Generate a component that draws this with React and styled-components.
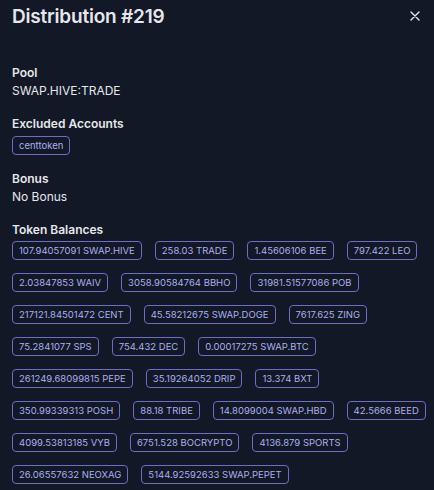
import React from 'react';
import styled, { createGlobalStyle } from 'styled-components';

const GlobalStyle = createGlobalStyle`
  html, body {
    margin: 0;
    padding: 0;
    background: #121826;
  }
  body {
    font-family: 'Inter', 'Liberation Sans', sans-serif;
    -webkit-font-smoothing: antialiased;
  }
`;

const Panel = styled.div`
  width: 434px;
  height: 490px;
  box-sizing: border-box;
  background: #121826;
  color: #e5e7eb;
  padding: 2px 12px 0 12px;
  overflow: hidden;
`;

const Header = styled.header`
  display: flex;
  align-items: center;
  justify-content: space-between;
  height: 28px;
  margin-bottom: 34px;
`;

const Title = styled.h2`
  margin: 0;
  font-size: 19px;
  font-weight: 600;
  letter-spacing: -0.2px;
  color: #e5e7eb;
`;

const CloseButton = styled.button`
  background: none;
  border: none;
  padding: 0;
  margin-right: 1px;
  width: 12px;
  height: 12px;
  display: flex;
  align-items: center;
  justify-content: center;
  cursor: pointer;
  color: #e5e7eb;
`;

const Section = styled.section`
  margin-bottom: 15px;
`;

const Label = styled.div`
  font-size: 12px;
  line-height: 18px;
  font-weight: 600;
  color: #e5e7eb;
`;

const Value = styled.div`
  font-size: 12px;
  line-height: 18px;
  font-weight: 400;
  color: #e5e7eb;
`;

const BadgeList = styled.div`
  display: flex;
  flex-wrap: wrap;
  column-gap: 13px;
  row-gap: 13px;
  margin-right: -10px;
  margin-top: ${(p) => p.$offset || 3}px;
`;

const Badge = styled.span`
  display: inline-flex;
  align-items: center;
  height: 19px;
  box-sizing: border-box;
  padding: 0 6px;
  border: 1px solid #6a6fc4;
  border-radius: 4px;
  font-size: 9.5px;
  color: #a9b1ee;
  white-space: nowrap;
`;

const balances = [
  '107.94057091 SWAP.HIVE',
  '258.03 TRADE',
  '1.45606106 BEE',
  '797.422 LEO',
  '2.03847853 WAIV',
  '3058.90584764 BBHO',
  '31981.51577086 POB',
  '217121.84501472 CENT',
  '45.58212675 SWAP.DOGE',
  '7617.625 ZING',
  '75.2841077 SPS',
  '754.432 DEC',
  '0.00017275 SWAP.BTC',
  '261249.68099815 PEPE',
  '35.19264052 DRIP',
  '13.374 BXT',
  '350.99339313 POSH',
  '88.18 TRIBE',
  '14.8099004 SWAP.HBD',
  '42.5666 BEED',
  '4099.53813185 VYB',
  '6751.528 BOCRYPTO',
  '4136.879 SPORTS',
  '26.06557632 NEOXAG',
  '5144.92592633 SWAP.PEPET',
];

const App = () => {
  return (
    <>
      <GlobalStyle />
      <Panel>
        <Header>
          <Title>Distribution #219</Title>
          <CloseButton aria-label='Close'>
            <svg width='10' height='10' viewBox='0 0 10 10'>
              <path d='M1 1L9 9M9 1L1 9' stroke='currentColor' strokeWidth='1.4' strokeLinecap='round' />
            </svg>
          </CloseButton>
        </Header>

        <Section>
          <Label>Pool</Label>
          <Value>SWAP.HIVE:TRADE</Value>
        </Section>

        <Section>
          <Label>Excluded Accounts</Label>
          <BadgeList>
            <Badge>centtoken</Badge>
          </BadgeList>
        </Section>

        <Section>
          <Label>Bonus</Label>
          <Value>No Bonus</Value>
        </Section>

        <Section>
          <Label>Token Balances</Label>
          <BadgeList $offset={2}>
            {balances.map((b) => (
              <Badge key={b}>{b}</Badge>
            ))}
          </BadgeList>
        </Section>
      </Panel>
    </>
  );
};

export default App;
